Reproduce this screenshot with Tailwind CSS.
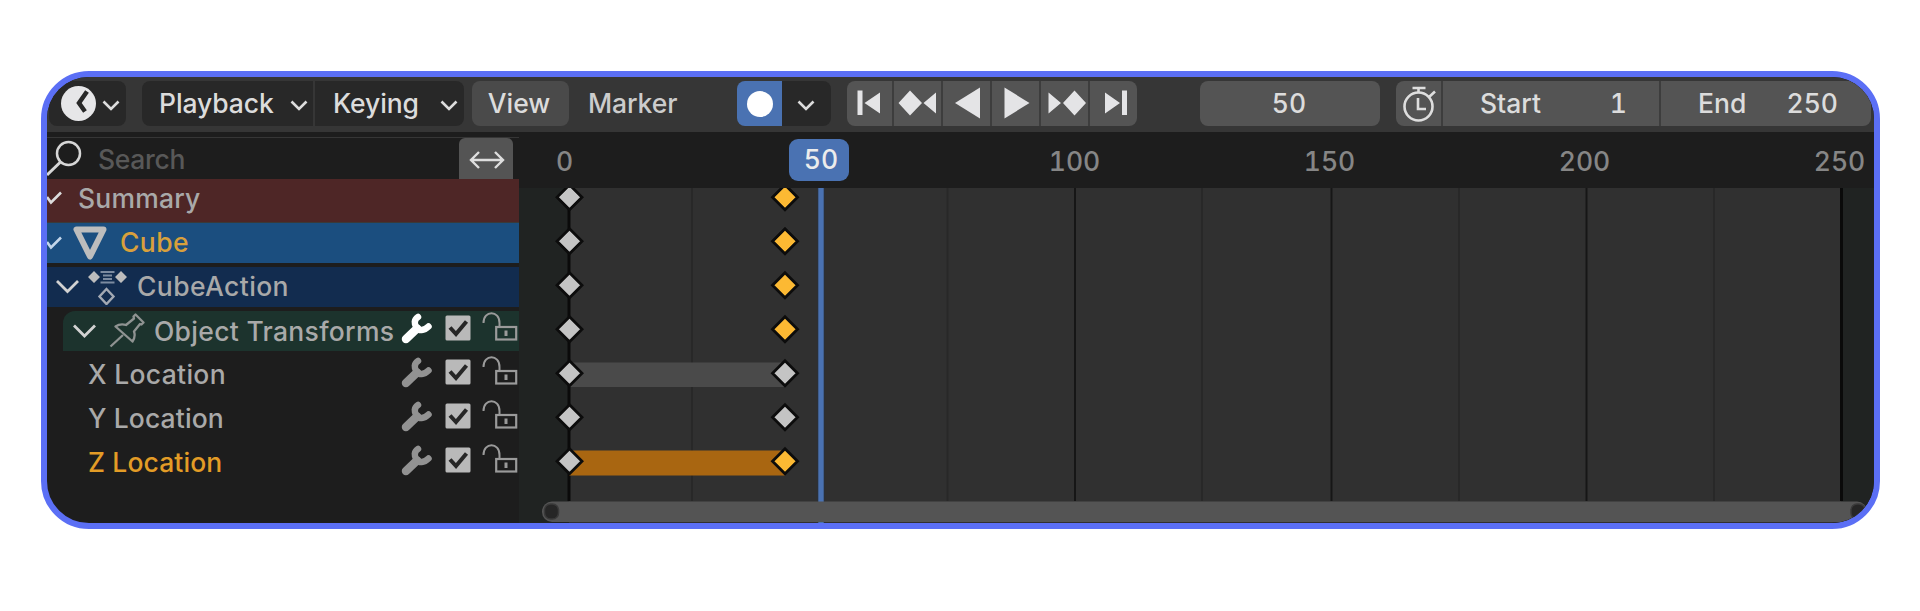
<!DOCTYPE html>
<html lang="en">

<head>
    <meta charset="UTF-8">
    <meta name="viewport" content="width=device-width, initial-scale=1.0">
    <title>Dope Sheet</title>

    <script src="https://cdn.jsdelivr.net/npm/@tailwindcss/browser@4"></script>
</head>

<body class="bg-white h-[611px] overflow-hidden pt-[71px] pl-[41px] font-['Inter','Liberation_Sans',sans-serif] font-medium text-[26.5px] leading-none tabular-nums">

    <svg class="hidden">
        <symbol id="chevron" viewBox="0 0 18 11">
            <path d="M1.5 1.5 9 9l7.5-7.5" fill="none" stroke="currentColor" stroke-width="2.6" />
        </symbol>
        <symbol id="row-tools" viewBox="0 0 119 40">
            <path d="M6 28 17 17.500" fill="none" stroke="var(--wrench)" stroke-width="8.500" stroke-linecap="round" />
            <path d="M18 6C14 8.500 14 13 16.500 16.500c2.500 3.500 7.500 3.500 12-1" fill="none" stroke="var(--wrench)" stroke-width="6.500" stroke-linecap="round" />
            <rect x="45.500" y="4.500" width="25" height="25" rx="1.500" fill="#b9b9b9" />
            <path d="m50 16.500 6 6.500L66.500 10.500" fill="none" stroke="#262626" stroke-width="4" />
            <path d="M83.500 12c0-13 16-13 16 0v4" fill="none" stroke="#9a9a9a" stroke-width="2" />
            <rect x="96.200" y="16" width="20" height="12.500" fill="none" stroke="#9a9a9a" stroke-width="2.200" />
            <path d="M106 19.500v5.500" stroke="#9a9a9a" stroke-width="3" />
        </symbol>
    </svg>

    <div class="w-[1839px] h-[458px] border-6 border-[#5b6ff5] rounded-[48px] overflow-hidden bg-[#1d1d1d] text-[#dcdcdc]">

        <!-- header -->
        <div class="h-[55px] bg-[#363636] pt-[4px] pl-[2px] flex items-start">
            <div class="w-[77px] h-[45px] bg-[#282828] rounded-lg flex items-center pl-[12px]">
                <svg class="w-[35px] h-[35px]" viewBox="0 0 35 35">
                    <circle cx="17.500" cy="17.500" r="17.500" fill="#e6e6e8" />
                    <path d="M26 5.500 18 17l6 8.500" fill="none" stroke="#282828" stroke-width="4.500" />
                </svg>
                <svg class="w-[18px] h-[11px] ml-[6px] mt-[4px]"><use href="#chevron" /></svg>
            </div>

            <div class="ml-[16px] w-[322px] h-[45px] bg-[#282828] rounded-lg flex items-center">
                <div class="w-[173px] h-full border-r-2 border-[#363636] flex items-center justify-between pl-[17px] pr-[5px]">
                    <span class="tracking-[-0.1px]">Playback</span>
                    <svg class="w-[18px] h-[11px] mt-[4px]"><use href="#chevron" /></svg>
                </div>
                <div class="flex-1 flex items-center justify-between pl-[18px] pr-[6px]">
                    <span class="tracking-[-0.1px]">Keying</span>
                    <svg class="w-[18px] h-[11px] mt-[4px]"><use href="#chevron" /></svg>
                </div>
            </div>

            <div class="ml-[8px] w-[97px] h-[45px] bg-[#4a4a4a] rounded-lg flex items-center justify-center pr-[3px]">View</div>
            <div class="ml-[19px] w-[149px] h-[45px] flex items-center text-[#cccccc]"><span class="tracking-[-0.1px]">Marker</span></div>

            <div class="w-[94px] h-[45px] rounded-lg overflow-hidden flex">
                <div class="w-[45px] bg-[#4a72b2] flex items-center justify-center">
                    <div class="w-[26px] h-[26px] rounded-full bg-white"></div>
                </div>
                <div class="flex-1 bg-[#282828] flex items-center justify-center pr-[2px]">
                    <svg class="w-[18px] h-[11px] mt-[4px]"><use href="#chevron" /></svg>
                </div>
            </div>

            <svg class="ml-[16px] w-[290px] h-[45px] rounded-lg bg-[#545454]" viewBox="0 0 290 45">
                <path d="M46 0v45M95 0v45M144 0v45M193 0v45M242 0v45" stroke="#3d3d3d" stroke-width="2" />
                <g fill="#e4e4e6">
                    <path d="M10.500 9.500h5v24.500h-5zM33 11.500v21L17.500 22z" />
                    <path d="m63 9.500 12 12.500L63 34.500 51.500 22zM89 11.500v21L76.500 22z" />
                    <path d="M133 6.500v31l-25-15.500z" />
                    <path d="M157.500 6.500v31l25-15.500z" />
                    <path d="M201.500 11.500v21L214 22zM227.500 9.500l11.500 12.500L227.500 34.500 216 22z" />
                    <path d="M258 11.500v21l15-10.500zM275 9.500h5v24.500h-5z" />
                </g>
            </svg>

            <div class="ml-[63px] w-[180px] h-[45px] rounded-lg bg-[#545454] flex items-center justify-center pr-[2px]">50</div>

            <div class="ml-[16px] w-[475px] h-[45px] rounded-lg bg-[#545454] flex items-center">
                <div class="w-[47px] h-full border-r-2 border-[#3d3d3d] flex items-center pl-[7px]">
                    <svg class="w-[34px] h-[38px]" viewBox="0 0 34 38" fill="none" stroke="#dedede" stroke-width="2.600">
                        <circle cx="15.500" cy="21.500" r="14" />
                        <path d="M9.500 3h13M15.500 3v5M25.500 12.500 32 6.500M15 13v11h8" />
                    </svg>
                </div>
                <div class="w-[218px] h-full border-r-2 border-[#3d3d3d] flex items-center justify-between pl-[37px] pr-[32px]">
                    <span>Start</span><span>1</span>
                </div>
                <div class="flex-1 flex items-center justify-between pl-[37px] pr-[33px]">
                    <span>End</span><span>250</span>
                </div>
            </div>
        </div>

        <div class="flex h-[391px]">
            <!-- channel list -->
            <div class="w-[472px] text-[#a9a9a9]">
                <div class="mt-[5px] h-[42px] flex border-t border-[#363636]">
                    <svg class="w-[36px] h-[40px]" viewBox="0 0 36 40" fill="none" stroke="#d6d6d6">
                        <circle cx="21.500" cy="15.500" r="11.500" stroke-width="2.500" />
                        <path d="M13.500 24 0 37" stroke-width="3" />
                    </svg>
                    <div class="flex-1 pl-[15px] pt-[8px] text-[#585858] tracking-[-0.3px]">Search</div>
                    <div class="w-[54px] mr-[6px] bg-[#545454] rounded-t-md flex items-center justify-center">
                        <svg class="w-[36px] h-[18px] mt-[2px] ml-[2px]" viewBox="0 0 36 18" fill="none" stroke="#dedede" stroke-width="2.400">
                            <path d="M2 9h32M10 1 2 9l8 8M26 1l8 8-8 8" />
                        </svg>
                    </div>
                </div>

                <div class="h-[44px] border-b border-[#3a3a3a] bg-[#4e2626] flex items-start">
                    <svg class="w-[16px] h-[14px] mt-[12px]" viewBox="0 0 16 14"><path d="m0 6 4 5.500L14 1.500" fill="none" stroke="#dcdcdc" stroke-width="2.600" /></svg>
                    <span class="ml-[15px] mt-[6px] tracking-[0.2px]">Summary</span>
                </div>

                <div class="h-[40px] bg-[#1b4e7f] flex items-center pb-px">
                    <svg class="w-[16px] h-[14px]" viewBox="0 0 16 14"><path d="m0 6 4 5.500L14 1.500" fill="none" stroke="#c3d6ea" stroke-width="2.600" /></svg>
                    <svg class="w-[34px] h-[34px] ml-[10px]" viewBox="0 0 34 34"><path d="M3.500 3.500h27L17 30.500z" fill="none" stroke="#bdbdbd" stroke-width="6" stroke-linejoin="round" /></svg>
                    <span class="ml-[13px] text-[#d9a03c] tracking-[0.4px]">Cube</span>
                </div>

                <div class="mt-[4px] h-[40px] bg-[#122c4f] flex items-center pb-[2px]">
                    <svg class="w-[24px] h-[15px] ml-[8px]" viewBox="0 0 24 15"><path d="M2 2 12.500 12.500 23 2" fill="none" stroke="#d2d2d2" stroke-width="2.800" /></svg>
                    <svg class="w-[39px] h-[38px] ml-[9px]" viewBox="0 0 39 38">
                        <path d="m6 4 6 6-6 6-6-6zM33 4l6 6-6 6-6-6z" fill="#bdbdbd" />
                        <path d="M12.500 5h14M15 8.500h9M15 12h9M12.500 15.500h14" stroke="#7c8ba0" stroke-width="2.200" />
                        <path d="m18.500 22 7 7.500-7 7.500-7-7.500z" fill="none" stroke="#a3a9b3" stroke-width="2.400" />
                    </svg>
                    <span class="ml-[10px] tracking-[0.4px]">CubeAction</span>
                </div>

                <div class="mt-[4px] ml-[16px] h-[40px] bg-[#1c332d] rounded-tl-xl flex items-center">
                    <svg class="w-[24px] h-[15px] ml-[9px]" viewBox="0 0 24 15"><path d="M2 1.500 12.500 12 23 1.500" fill="none" stroke="#d2d2d2" stroke-width="2.800" /></svg>
                    <svg class="w-[37px] h-[36px] ml-[13px] shrink-0" viewBox="0 0 37 36" fill="none" stroke="#8f9392" stroke-width="2.300" stroke-linejoin="round">
                        <path d="m26.500 1.500 8 8-2 2-1.500-.500-6 7.500c1.500 4 .500 7-1.500 10L6.500 13.500c3-2 7-2.500 10.500-1.500l8-6.500-.5-2z" />
                        <path d="M14 22 1.500 33.500" />
                    </svg>
                    <span class="flex-1 ml-[8px] tracking-[0.3px] whitespace-nowrap">Object Transforms</span>
                    <svg class="w-[119px] h-[40px] shrink-0 [--wrench:#ffffff]"><use href="#row-tools" /></svg>
                </div>

                <div class="mt-[4px] h-[40px] flex items-center justify-between pl-[41px]">
                    <span class="tracking-[0.3px] pb-px">X Location</span>
                    <svg class="w-[119px] h-[40px] [--wrench:#929292]"><use href="#row-tools" /></svg>
                </div>
                <div class="mt-[4px] h-[40px] flex items-center justify-between pl-[41px]">
                    <span class="tracking-[0.1px] pb-px">Y Location</span>
                    <svg class="w-[119px] h-[40px] [--wrench:#929292]"><use href="#row-tools" /></svg>
                </div>
                <div class="mt-[4px] h-[40px] flex items-center justify-between pl-[41px]">
                    <span class="tracking-[0.1px] pb-px text-[#e39c26]">Z Location</span>
                    <svg class="w-[119px] h-[40px] [--wrench:#929292]"><use href="#row-tools" /></svg>
                </div>
            </div>

            <!-- timeline -->
            <div class="relative w-[1355px]">
                <div id="ruler" class="relative h-[56px] text-[#868686]"></div>
                <svg id="keys" class="block w-[1355px] h-[335px] bg-[#202322]" viewBox="519 188 1355 335"></svg>
                <div class="absolute left-[270px] top-[7px] w-[60px] h-[42px] rounded-[9px] bg-[#4a72b2] text-[#ececec] flex items-center justify-center pb-[2px] pl-[4px]">50</div>
            </div>
        </div>
    </div>

    <script>
        const ruler = document.getElementById('ruler');
        const labels = [[0, 45.5], [100, 555.5], [150, 810.5], [200, 1065.5], [250, 1320.5]];
        labels.forEach(([frame, x]) => {
            const label = document.createElement('span');
            label.className = 'absolute top-[16px] -translate-x-1/2';
            label.style.left = x + 'px';
            label.textContent = frame;
            ruler.appendChild(label);
        });

        const line = (x, w, color) => `<rect x="${x - w / 2}" y="188" width="${w}" height="313" fill="${color}" />`;
        const key = (x, y, color) => `<path d="M${x} ${y - 12.5}l12.5 12.5l-12.5 12.5l-12.5 -12.5z" fill="${color}" stroke="#0c0c0c" stroke-width="2.8" />`;

        let out = '<rect x="569" y="188" width="1272" height="335" fill="#303030" />';
        [692, 947.5, 1202, 1459, 1714].forEach(x => out += line(x, 2, '#282828'));
        [1075, 1331.5, 1586.5].forEach(x => out += line(x, 2, '#161616'));
        out += line(569, 3, '#0a0a0a') + line(1841.5, 3, '#0a0a0a');

        // hold bars
        out += '<rect x="569" y="362.5" width="216" height="24.5" fill="#4a4a4a" />';
        out += '<rect x="569" y="450.500" width="216" height="25" fill="#a96611" />';

        const selected = [true, true, true, true, false, false, true];
        selected.forEach((on, i) => {
            const y = 197.3 + i * 44;
            out += key(569.5, y, '#c4c4c4') + key(785, y, on ? '#fcb933' : '#c4c4c4');
        });

        // playhead
        out += '<rect x="817" y="188" width="8" height="335" fill="#2b3038" /><rect x="818.3" y="188" width="5.400" height="335" fill="#4a72b2" />';

        // scrollbar
        out += '<rect x="542" y="501.500" width="1325" height="20.500" rx="10" fill="#545454" />';
        out += '<rect x="544.500" y="504" width="14" height="15" rx="6" fill="#262626" stroke="#3a3a3a" stroke-width="1.500" />';
        out += '<rect x="1851" y="504" width="14" height="15" rx="6" fill="#262626" stroke="#3a3a3a" stroke-width="1.500" />';
        document.getElementById('keys').innerHTML = out;
    </script>

</body>

</html>
